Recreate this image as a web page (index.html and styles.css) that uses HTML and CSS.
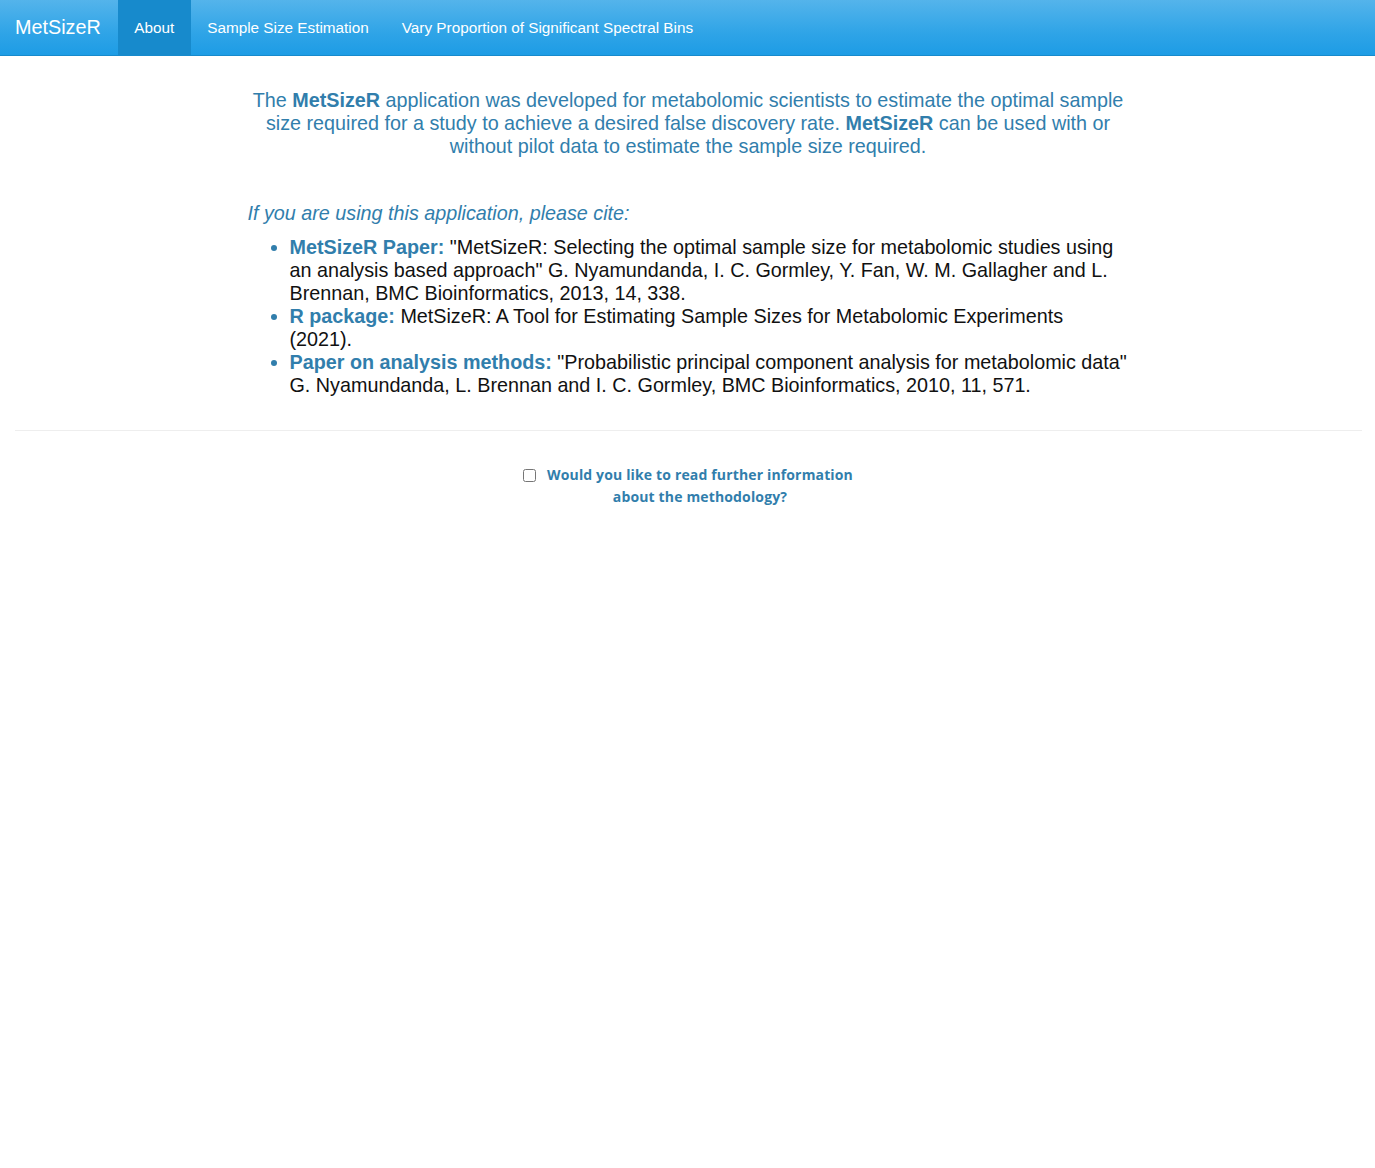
FILE: index.html
```html
<!DOCTYPE html>
<html lang="en">
<head>
<meta charset="utf-8">
<title>MetSizeR</title>
<link rel="stylesheet" href="styles.css">
</head>
<body>
<nav class="navbar">
  <span class="brand">MetSizeR</span>
  <ul class="nav">
    <li class="nav-item active">About</li>
    <li class="nav-item">Sample Size Estimation</li>
    <li class="nav-item">Vary Proportion of Significant Spectral Bins</li>
  </ul>
</nav>
<main class="page">
  <section class="intro">
    <p class="lead">The <strong>MetSizeR</strong> application was developed for metabolomic scientists to estimate the optimal sample size required for a study to achieve a desired false discovery rate. <strong>MetSizeR</strong> can be used with or without pilot data to estimate the sample size required.</p>
    <p class="cite-title">If you are using this application, please cite:</p>
    <ul class="cites">
      <li><b>MetSizeR Paper:</b> "MetSizeR: Selecting the optimal sample size for metabolomic studies using an analysis based approach" G. Nyamundanda, I. C. Gormley, Y. Fan, W. M. Gallagher and L. Brennan, BMC Bioinformatics, 2013, 14, 338.</li>
      <li><b>R package:</b> MetSizeR: A Tool for Estimating Sample Sizes for Metabolomic Experiments (2021).</li>
      <li><b>Paper on analysis methods:</b> "Probabilistic principal component analysis for metabolomic data" G. Nyamundanda, L. Brennan and I. C. Gormley, BMC Bioinformatics, 2010, 11, 571.</li>
    </ul>
  </section>
  <hr class="divider">
  <div class="more">
    <label class="check">
      <input type="checkbox" class="box">
      <span>Would you like to read further information about the methodology?</span>
    </label>
  </div>
</main>
</body>
</html>
```

FILE: styles.css
```css
html, body {
  margin: 0;
  padding: 0;
  background: #fff;
  font-family: "Liberation Sans", Arial, Helvetica, sans-serif;
}

.navbar {
  height: 55px;
  display: flex;
  align-items: stretch;
  background: linear-gradient(#54b4eb, #2fa4e7 60%, #1d9ce5);
  border-bottom: 1px solid #178acc;
  color: #fff;
}

.brand {
  font-size: 19.8px;
  line-height: 55px;
  padding: 0 17px 0 15px;
}

.nav {
  list-style: none;
  margin: 0;
  padding: 0;
  display: flex;
}

.nav-item {
  font-size: 15.3px;
  line-height: 55px;
  padding: 0 16.5px;
}

.nav-item.active {
  background: #178acc;
}

.page {
  padding: 0 13px 0 15px;
}

.intro {
  box-sizing: border-box;
  width: 886px;
  margin: 0 auto;
  padding-left: 2px;
  padding-right: 3px;
}

.lead {
  margin: 33px 0 0;
  text-align: center;
  color: #317eac;
  font-size: 19.75px;
  line-height: 23px;
}

.lead strong {
  font-weight: bold;
}

.cite-title {
  margin: 44px 0 0;
  font-style: italic;
  color: #317eac;
  font-size: 19.75px;
  line-height: 23px;
}

.cites {
  margin: 11px 0 0;
  padding-left: 42px;
  font-size: 19.75px;
  line-height: 23px;
  color: #111;
}

.cites li::marker {
  color: #317eac;
}

.cites b {
  color: #317eac;
  font-weight: bold;
}

.divider {
  margin: 33px 0 0;
  border: 0;
  border-top: 1px solid #eeeeee;
}

.more {
  display: flex;
  justify-content: center;
  padding-top: 33px;
}

.check {
  display: flex;
  align-items: flex-start;
  width: 334px;
  margin-left: 2px;
  color: #317eac;
  font-family: "Open Sans", "DejaVu Sans", sans-serif;
  font-weight: bold;
  font-size: 14px;
  line-height: 22px;
  letter-spacing: 0.15px;
}

.check span {
  text-align: center;
  flex: 1;
}

.box {
  width: 13px;
  height: 13px;
  margin: 5px 8px 0 0;
  flex: none;
}
```
